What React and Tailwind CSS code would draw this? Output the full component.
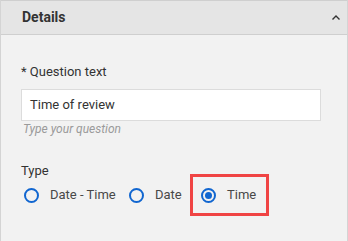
import React from 'react';

const Radio = ({ label, checked }) => (
  <label className="flex items-center">
    <span className="w-[15px] h-[15px] rounded-full border-2 border-[#1166d0] flex items-center justify-center">
      {checked && <span className="w-[7px] h-[7px] rounded-full bg-[#1166d0]" />}
    </span>
    <span className="ml-[11px] text-[13px] text-[#484848]">{label}</span>
  </label>
);

export default function App() {
  return (
    <div
      className="w-[348px] h-[241px] bg-[#f2f2f2] border-x border-[#d4d4d4] overflow-hidden"
      style={{ fontFamily: 'Roboto, "Liberation Sans", sans-serif' }}
    >
      <div className="h-[35px] bg-[#e5e5e5] border-t border-b border-[#cfcfcf] flex items-center justify-between pl-[21px] pr-[6px]">
        <span className="text-[14px] font-bold text-[#333]">Details</span>
        <svg width="10" height="7" viewBox="0 0 10 7">
          <path d="M1.5 5.5 L5 2 L8.5 5.5" fill="none" stroke="#333" strokeWidth="1.4" />
        </svg>
      </div>
      <div className="pl-[20px] pt-[29px]">
        <div className="text-[13px] text-[#333] leading-[16px]">* Question text</div>
        <div className="mt-[9px] w-[300px] h-[32px] bg-white border border-[#dcdcdc] flex items-center pl-[8px] text-[13px] text-[#333]">
          Time of review
        </div>
        <div className="mt-[1px] pl-[2px] text-[12px] italic text-[#9a9a9a] leading-[15px]">Type your question</div>
        <div className="mt-[26px] text-[13px] text-[#333] leading-[16px]">Type</div>
        <div className="flex items-center mt-[-5px] h-[42px]">
          <div className="w-[108px] pl-[3px]"><Radio label="Date - Time" /></div>
          <div className="w-[61px]"><Radio label="Date" /></div>
          <div className="h-[42px] w-[79px] border-[3px] border-[#f04444] flex items-center pl-[8px]">
            <Radio label="Time" checked />
          </div>
        </div>
      </div>
    </div>
  );
}
